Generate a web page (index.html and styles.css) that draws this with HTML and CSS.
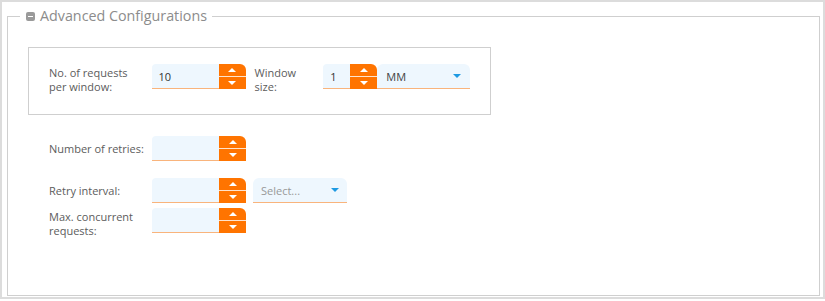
FILE: index.html
```html
<!DOCTYPE html>
<html lang="en">
<head>
  <meta charset="UTF-8">
  <title>Advanced Configurations</title>
  <link rel="stylesheet" href="styles.css">
</head>
<body>
  <div class="page">
    <fieldset class="panel">
      <legend class="panel-title"><span class="collapse-icon"></span>Advanced Configurations</legend>

      <div class="panel-body">
        <div class="box">
          <div class="row">
            <label class="label label-2">No. of requests<br>per window:</label>
            <div class="spin">
              <div class="spin-input">10</div>
              <div class="spin-btn"><span class="up"></span><span class="down"></span></div>
            </div>
            <label class="label label-2 label-short">Window size:</label>
            <div class="spin spin-sm">
              <div class="spin-input">1</div>
              <div class="spin-btn"><span class="up"></span><span class="down"></span></div>
            </div>
            <div class="select"><span class="select-value">MM</span><span class="caret"></span></div>
          </div>
        </div>

        <div class="fields">
          <div class="row">
            <label class="label">Number of retries:</label>
            <div class="spin">
              <div class="spin-input"></div>
              <div class="spin-btn"><span class="up"></span><span class="down"></span></div>
            </div>
          </div>

          <div class="row row-gap">
            <label class="label">Retry interval:</label>
            <div class="spin">
              <div class="spin-input"></div>
              <div class="spin-btn"><span class="up"></span><span class="down"></span></div>
            </div>
            <div class="select select-left"><span class="select-value placeholder">Select...</span><span class="caret"></span></div>
          </div>

          <div class="row row-tight">
            <label class="label label-2">Max. concurrent requests:</label>
            <div class="spin">
              <div class="spin-input"></div>
              <div class="spin-btn"><span class="up"></span><span class="down"></span></div>
            </div>
          </div>
        </div>
      </div>
    </fieldset>
  </div>
</body>
</html>
```

FILE: styles.css
```css
:root {
  --orange: #ff7400;
  --orange-light: #f9b47c;
  --field-bg: #eef7fe;
  --line: #cfcfcf;
  --text: #5c5c5c;
  --muted: #8c8c8c;
  --blue: #1e9ae2;
}

* {
  box-sizing: border-box;
  margin: 0;
  padding: 0;
}

body {
  font-family: 'Open Sans', 'Liberation Sans', sans-serif;
  font-size: 11px;
  color: var(--text);
  background: white;
}

.page {
  display: flex;
  flex-direction: column;
  width: 825px;
  height: 299px;
  border: 2px solid #dcdcdc;
  background: white;
}

.panel {
  flex: 1;
  margin: 4px 3px 1px 5px;
  border: 1px solid var(--line);
  padding: 0;
  min-width: 0;
}

.panel-title {
  display: flex;
  align-items: center;
  gap: 5px;
  margin-left: 12px;
  padding: 0 5px 0 6px;
  font-size: 14.3px;
  line-height: 20px;
  color: var(--muted);
}

.collapse-icon {
  position: relative;
  width: 9px;
  height: 9px;
  border-radius: 2px;
  background: #9a9a9a;
}

.collapse-icon::after {
  content: "";
  position: absolute;
  left: 2px;
  right: 2px;
  top: 4px;
  height: 1px;
  background: white;
}

.panel-body {
  padding: 21px 20px;
}

.box {
  width: 463px;
  border: 1px solid var(--line);
  padding: 16px 20px 20px;
}

.fields {
  display: flex;
  flex-direction: column;
  margin-top: 21px;
  padding-left: 21px;
}

.row {
  display: flex;
  align-items: center;
}

.row-gap {
  margin-top: 17px;
}

.row-tight {
  margin-top: 5px;
}

.label {
  width: 103px;
  line-height: 14px;
}

.label-2 {
  align-self: flex-start;
  padding-top: 2px;
}

.label-short {
  width: 69px;
  margin-left: 9px;
  padding-right: 20px;
}

.spin {
  display: flex;
  align-self: flex-start;
  height: 25px;
}

.spin-input {
  width: 67px;
  padding: 5px 7px 0;
  background: var(--field-bg);
  border-bottom: 1px solid var(--orange-light);
  border-top-left-radius: 4px;
  color: #333;
}

.spin-sm .spin-input {
  width: 27px;
}

.spin-btn {
  display: flex;
  flex-direction: column;
  width: 27px;
  background: var(--orange);
  border-top-right-radius: 6px;
}

.spin-btn span {
  flex: 1;
  display: flex;
  align-items: center;
  justify-content: center;
}

.spin-btn .up {
  border-bottom: 1px solid rgba(255, 255, 255, 0.8);
}

.spin-btn .up::before,
.spin-btn .down::before {
  content: "";
  border-left: 4px solid transparent;
  border-right: 4px solid transparent;
}

.spin-btn .up::before {
  border-bottom: 4px solid white;
}

.spin-btn .down::before {
  border-top: 4px solid white;
}

.select {
  display: flex;
  align-items: center;
  justify-content: space-between;
  align-self: flex-start;
  width: 93px;
  height: 25px;
  padding: 0 9px 0 9px;
  background: var(--field-bg);
  border-bottom: 1px solid var(--orange-light);
  border-radius: 6px 6px 0 0;
  color: #444;
}

.select-left {
  width: 94px;
  margin-left: 7px;
  padding: 0 8px;
}

.placeholder {
  color: #999;
}

.caret {
  border-left: 4px solid transparent;
  border-right: 4px solid transparent;
  border-top: 4px solid var(--blue);
}
```
